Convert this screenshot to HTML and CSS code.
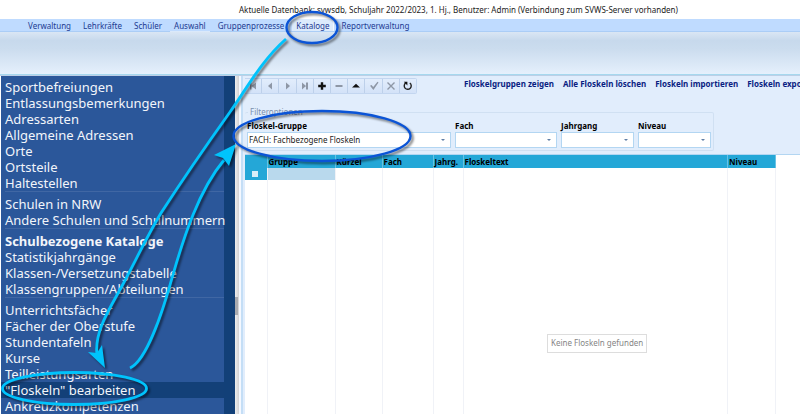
FILE: index.html
```html
<!DOCTYPE html>
<html lang="de">
<head>
    <meta charset="UTF-8">
    <meta name="viewport" content="width=device-width, initial-scale=1.0">
    <title>Kataloge</title>
    <link rel="stylesheet" href="styles.css">
</head>
<body>
    <header class="titlebar">Aktuelle Datenbank: svwsdb, Schuljahr 2022/2023, 1. Hj., Benutzer: Admin (Verbindung zum SVWS-Server vorhanden)</header>

    <!-- Menüband -->
    <nav class="tabs">
        <a href="#">Verwaltung</a>
        <a href="#">Lehrkräfte</a>
        <a href="#">Schüler</a>
        <a href="#" class="hover">Auswahl</a>
        <a href="#">Gruppenprozesse</a>
        <a href="#" class="active">Kataloge</a>
        <a href="#">Reportverwaltung</a>
    </nav>
    <div class="ribbon"></div>

    <div class="main">
        <!-- Katalogliste -->
        <nav class="sidebar">
            <ul>
                <li><a href="#">Sportbefreiungen</a></li>
                <li><a href="#">Entlassungsbemerkungen</a></li>
                <li><a href="#">Adressarten</a></li>
                <li><a href="#">Allgemeine Adressen</a></li>
                <li><a href="#">Orte</a></li>
                <li><a href="#">Ortsteile</a></li>
                <li><a href="#">Haltestellen</a></li>
            </ul>
            <ul>
                <li><a href="#">Schulen in NRW</a></li>
                <li><a href="#">Andere Schulen und Schulnummern</a></li>
            </ul>
            <ul>
                <li class="heading">Schulbezogene Kataloge</li>
                <li><a href="#">Statistikjahrgänge</a></li>
                <li><a href="#">Klassen-/Versetzungstabelle</a></li>
                <li><a href="#">Klassengruppen/Abteilungen</a></li>
            </ul>
            <ul>
                <li><a href="#">Unterrichtsfächer</a></li>
                <li><a href="#">Fächer der Oberstufe</a></li>
                <li><a href="#">Stundentafeln</a></li>
                <li><a href="#">Kurse</a></li>
                <li><a href="#">Teilleistungsarten</a></li>
                <li class="selected"><a href="#">"Floskeln" bearbeiten</a></li>
                <li><a href="#">Ankreuzkompetenzen</a></li>
            </ul>
        </nav>
        <div class="splitter"><span class="grip"></span></div>

        <main class="content">
            <div class="toolbar">
                <div class="navigator">
                    <button aria-label="Erster"><svg viewBox="0 0 12 12"><path d="M3 2.5h1.5v7H3zM9 2.5v7L4.500 6z"/></svg></button>
                    <button aria-label="Zurück"><svg viewBox="0 0 12 12"><path d="M8 2.500v7L4 6z"/></svg></button>
                    <button aria-label="Weiter"><svg viewBox="0 0 12 12"><path d="M4 2.500v7L8 6z"/></svg></button>
                    <button aria-label="Letzter"><svg viewBox="0 0 12 12"><path d="M3 2.500v7L7 6zM7 2.500h2v7H7z"/></svg></button>
                    <button aria-label="Einfügen" class="on"><svg viewBox="0 0 12 12"><path d="M4.800 2.200h2.400v2.600h2.600v2.400H7.200v2.600H4.800V7.200H2.200V4.800h2.600z"/></svg></button>
                    <button aria-label="Löschen"><svg viewBox="0 0 12 12"><path d="M2.500 5h7v2h-7z"/></svg></button>
                    <button aria-label="Bearbeiten" class="on"><svg viewBox="0 0 12 12"><path d="M6 3.800L10 7.500H2z"/></svg></button>
                    <button aria-label="Speichern"><svg viewBox="0 0 12 12"><path d="M2 5.800l1.600-.8 1.600 2L9.500 1.800l1 .8L5.400 10z"/></svg></button>
                    <button aria-label="Abbrechen"><svg viewBox="0 0 12 12"><path d="M2.500 2.500l7 7M9.500 2.500l-7 7" fill="none" stroke="#8e97a6" stroke-width="1.400"/></svg></button>
                    <button aria-label="Aktualisieren" class="on"><svg viewBox="0 0 12 12"><path d="M7.800 3a3.500 3.500 0 1 1-4-.1" fill="none" stroke="#222" stroke-width="1.400"/><path d="M1.800 1.800h3.600v3.600z"/></svg></button>
                </div>
                <div class="actions">
                    <a href="#">Floskelgruppen zeigen</a>
                    <a href="#">Alle Floskeln löschen</a>
                    <a href="#">Floskeln importieren</a>
                    <a href="#">Floskeln exportieren</a>
                </div>
            </div>

            <fieldset class="filter">
                <legend>Filteroptionen</legend>
                <div class="field wide">
                    <label for="gruppe">Floskel-Gruppe</label>
                    <div class="combo"><select id="gruppe"><option>FACH: Fachbezogene Floskeln</option></select></div>
                </div>
                <div class="field medium">
                    <label for="fach">Fach</label>
                    <div class="combo"><select id="fach"><option></option></select></div>
                </div>
                <div class="field">
                    <label for="jahrgang">Jahrgang</label>
                    <div class="combo"><select id="jahrgang"><option></option></select></div>
                </div>
                <div class="field">
                    <label for="niveau">Niveau</label>
                    <div class="combo"><select id="niveau"><option></option></select></div>
                </div>
            </fieldset>

            <div class="grid">
                <table>
                    <colgroup>
                        <col class="c-mark"><col class="c-gruppe"><col class="c-kuerzel"><col class="c-fach"><col class="c-jahrg"><col><col class="c-niveau">
                    </colgroup>
                    <thead>
                        <tr><th></th><th>Gruppe</th><th>Kürzel</th><th>Fach</th><th>Jahrg.</th><th>Floskeltext</th><th>Niveau</th></tr>
                    </thead>
                    <tbody>
                        <tr class="row"><td class="mark"><input type="checkbox" aria-label="Zeile markieren"></td><td class="current"></td><td></td><td></td><td></td><td></td><td></td></tr>
                        <tr><td></td><td></td><td></td><td></td><td></td><td></td><td></td></tr>
                    </tbody>
                </table>
                <p class="empty">Keine Floskeln gefunden</p>
            </div>
        </main>
    </div>

    <!-- Markierungen über der Oberfläche -->
    <svg class="marks" width="800" height="414" viewBox="0 0 800 414" aria-hidden="true">
        <g fill="none" stroke="#0b54d6" stroke-width="2.400">
            <ellipse cx="312" cy="27.500" rx="25.500" ry="15.500"/>
            <ellipse cx="322" cy="136" rx="88.500" ry="25"/>
        </g>
        <g fill="none" stroke="#00c3fc" stroke-width="2.800">
            <ellipse cx="74.500" cy="388.500" rx="72" ry="16"/>
            <path d="M286 39C262 60 247 88 230 112C205 147 183 179 161 213C146 238 134 264 122 286C110 308 94 332 97 355"/>
            <path d="M130 368C146 361 162 314 172 278C184 236 199 190 224 160"/>
        </g>
        <g fill="#00c3fc">
            <path d="M105 368L88 352L97 353L102 345z"/>
            <path d="M236 144L214 155L223 158L229 166z"/>
        </g>
    </svg>
</body>
</html>
```
FILE: styles.css
```css
body {
    margin: 0;
    height: 100vh;
    display: flex;
    flex-direction: column;
    overflow: hidden;
    position: relative;
    background: #fff;
    font-family: "Noto Sans", "Open Sans", sans-serif;
    font-size: 8px;
    line-height: 12px;
    color: #000;
}

a {
    color: inherit;
    text-decoration: none;
}

ul {
    list-style: none;
    margin: 0;
    padding: 0;
}

.titlebar {
    padding: 4px 0 3px 239px;
    white-space: nowrap;
    color: #222;
}

/* Menüband */
.tabs {
    display: flex;
    gap: 4px;
    padding-left: 24px;
    background: #bfdbff;
    border-bottom: 1px solid #abcdf6;
    color: #1c3a91;
}

.tabs a {
    padding: 1px 4px 0;
    line-height: 11px;
}

.tabs .hover {
    box-shadow: 0 1px #dbe9fa;
}

.tabs .active {
    background: #dcebfc;
    box-shadow: 1px 0 #f2f8ff;
}

.ribbon {
    height: 42px;
    flex: none;
    background: linear-gradient(#dae6f4, #c7d9ec 20%, #cbdcee 40%, #e5f0fc);
    border-bottom: 1px solid #a6d8ee;
}

.main {
    flex: 1;
    min-height: 0;
    display: flex;
    overflow: hidden;
    border-top: 1px solid #bccfe6;
}

/* Katalogliste */
.sidebar {
    width: 223px;
    flex: none;
    margin-left: 1px;
    padding-top: 3px;
    background: #2b579a;
    border-right: 11px solid #124078;
    color: #f2f5fa;
    font-size: 13px;
    line-height: 16px;
    white-space: nowrap;
}

.sidebar ul + ul {
    padding-top: 5px;
    background: linear-gradient(#4067a4, #4067a4) 4px 0 / 219px 1px no-repeat;
}

.sidebar li {
    padding-left: 4px;
}

.sidebar .heading {
    font-weight: bold;
}

.sidebar .selected {
    background: #134078;
}

.splitter {
    width: 4px;
    flex: none;
    display: flex;
    align-items: center;
    background: linear-gradient(90deg, #eee, #d2d2d4);
    border-right: 2px solid #f4f8ff;
}

.grip {
    width: 3px;
    height: 18px;
    margin-top: 122px;
    background: #a9abb0;
}

.content {
    flex: 1;
    min-width: 0;
    display: flex;
    flex-direction: column;
    overflow: hidden;
    padding-left: 2px;
    border-left: 2px solid #c4def6;
    background: #e1edfc;
}

/* Werkzeugleiste */
.toolbar {
    display: flex;
    gap: 47px;
    padding-top: 2px;
}

.navigator {
    display: flex;
    width: 172px;
    height: 16px;
    flex: none;
    box-sizing: border-box;
    border: 1px solid #c3d6f0;
    border-left: none;
    border-radius: 0 2px 2px 0;
}

.navigator button {
    flex: 1;
    display: flex;
    align-items: center;
    justify-content: center;
    padding: 0;
    border: none;
    background: linear-gradient(#e2edfc, #d3e2f8);
}

.navigator button + button {
    border-left: 1px solid #bdd0ea;
}

.navigator svg {
    width: 12px;
    height: 12px;
    fill: #8e97a6;
}

.navigator .on svg {
    fill: #111;
}

.actions {
    display: flex;
    gap: 9px;
    white-space: nowrap;
    font-weight: bold;
    color: #0a1e82;
}

/* Filter */
.filter {
    align-self: flex-start;
    display: flex;
    gap: 4px;
    margin: 12px 0 3px;
    padding: 2px;
    border: 1px solid #d0e0f2;
    border-left: none;
    border-radius: 2px;
}

.filter legend {
    margin-left: 1px;
    padding: 0 2px;
    color: #7b90ad;
}

.field {
    width: 73px;
}

.field.medium {
    width: 102px;
}

.field.wide {
    width: 204px;
}

.field label {
    display: block;
    font-weight: bold;
}

.combo {
    position: relative;
}

.combo::after {
    content: "";
    position: absolute;
    right: 6px;
    top: 7px;
    border: 2px solid transparent;
    border-top-color: #5f7ea6;
    border-bottom: none;
    pointer-events: none;
}

.combo select {
    display: block;
    width: 100%;
    height: 16px;
    padding: 0 1px;
    appearance: none;
    border: 1px solid #b3d6f2;
    border-radius: 0;
    background: #fff;
    font: inherit;
    color: #222;
}

/* Tabelle */
.grid {
    flex: 1;
    min-height: 0;
    position: relative;
    display: flex;
    background: #fff;
    border-top: 1px solid #b3d6f2;
}

.grid table {
    width: calc(100% - 24px);
    height: 100%;
    table-layout: fixed;
    border-collapse: collapse;
}

.c-mark { width: 22px; }
.c-gruppe { width: 68px; }
.c-kuerzel { width: 47px; }
.c-fach { width: 51px; }
.c-jahrg { width: 30px; }
.c-niveau { width: 48px; }

.grid th {
    height: 13px;
    padding: 0 0 0 1px;
    background: #24a7d7;
    border-right: 1px solid #68c2e4;
    text-align: left;
    white-space: nowrap;
}

.grid td {
    padding: 0;
    border-right: 1px solid #f0f2f7;
}

.grid .row td {
    height: 12px;
}

.grid .row .mark {
    background: #24a7d7;
}

.grid .current {
    background: #b9d9ed;
}

.mark input {
    display: block;
    width: 6px;
    height: 6px;
    margin: 0 auto 0 7px;
    appearance: none;
    background: #d9eef8;
}

.empty {
    position: absolute;
    left: 302px;
    top: 179px;
    margin: 0;
    padding: 2px 3px 3px;
    border: 1px solid #ddd;
    background: #fff;
    color: #858585;
}

/* Markierungen */
.marks {
    position: absolute;
    left: 0;
    top: 0;
    pointer-events: none;
}

.marks g {
    filter: drop-shadow(2px 2px 1px rgba(0, 0, 0, 0.5));
}
```
